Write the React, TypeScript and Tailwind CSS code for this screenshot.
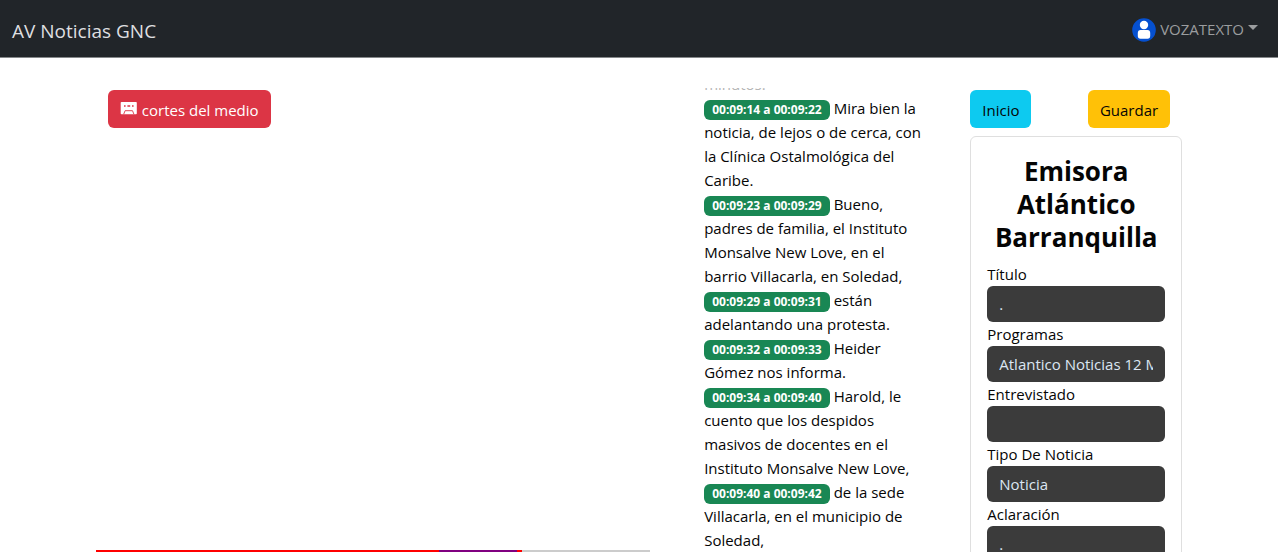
import { useLayoutEffect, useRef } from 'react';

type Segment = { time?: string; text: string };

const segments: Segment[] = [
  { text: 'minutos.' },
  {
    time: '00:09:14 a 00:09:22',
    text: 'Mira bien la noticia, de lejos o de cerca, con la Clínica Ostalmológica del Caribe.',
  },
  {
    time: '00:09:23 a 00:09:29',
    text: 'Bueno, padres de familia, el Instituto Monsalve New Love, en el barrio Villacarla, en Soledad,',
  },
  { time: '00:09:29 a 00:09:31', text: 'están adelantando una protesta.' },
  { time: '00:09:32 a 00:09:33', text: 'Heider Gómez nos informa.' },
  {
    time: '00:09:34 a 00:09:40',
    text: 'Harold, le cuento que los despidos masivos de docentes en el Instituto Monsalve New Love,',
  },
  { time: '00:09:40 a 00:09:42', text: 'de la sede Villacarla, en el municipio de Soledad,' },
];

const fields = [
  { id: 'titulo', label: 'Título', value: '.' },
  { id: 'programas', label: 'Programas', value: 'Atlantico Noticias 12 M' },
  { id: 'entrevistado', label: 'Entrevistado', value: '' },
  { id: 'tipo', label: 'Tipo De Noticia', value: 'Noticia' },
  { id: 'aclaracion', label: 'Aclaración', value: '.' },
];

function Navbar() {
  return (
    <nav className="flex h-[58px] items-center justify-between border-b border-[#85888a] bg-[#212529] pr-5 pl-3">
      <a href="#" className="pt-1 text-[19px] leading-7 text-[#dedfe0]">
        AV Noticias GNC
      </a>
      <button type="button" className="flex items-center gap-1 pt-0.5 text-[15px] text-[#9b9d9f]">
        <svg viewBox="0 0 24 24" className="size-6" aria-hidden="true">
          <circle cx="12" cy="12" r="11.8" fill="#0550d0" />
          <circle cx="12" cy="7" r="4.2" fill="#fff" />
          <path
            d="M8.500 12h7c1.700 0 2.700 1.200 2.700 3v3c0 1.600-.9 2.700-2.600 2.700H8.400c-1.700 0-2.600-1.100-2.600-2.700v-3c0-1.800 1-3 2.700-3z"
            fill="#fff"
          />
        </svg>
        VOZATEXTO
        <svg viewBox="0 0 10 5" className="mb-1 h-[5px] w-[10px]" aria-hidden="true">
          <path d="M0 0h10L5 5z" fill="#9b9d9f" />
        </svg>
      </button>
    </nav>
  );
}

function Player() {
  return (
    <section className="w-[51%]">
      <div className="flex h-[460px] items-start px-3">
        <button
          type="button"
          className="flex h-[38px] items-center gap-1 rounded-md bg-[#dc3545] px-3 pt-0.5 text-[15px] text-white"
        >
          <svg viewBox="0 0 18 14" className="mb-1 h-[14px] w-[18px]" aria-hidden="true">
            <path
              d="M1.500 1h14.500a.8.8 0 0 1 .8.800v10.600a.8.8 0 0 1-.8.800H1.500a.8.8 0 0 1-.8-.800V1.800a.8.8 0 0 1 .8-.800z"
              fill="#fff"
            />
            <path d="M4 4.200h1.600v1.600H4zM7.400 4.200h2.800v1.600H7.400zM12 4.200h1.600v1.600H12z" fill="#dc3545" />
            <path d="M3.700 13.200l1.400-3.500h7.400l1.400 3.500" fill="none" stroke="#dc3545" strokeWidth=".9" />
          </svg>
          cortes del medio
        </button>
      </div>
      <div className="flex h-4 bg-[#cccccc]" role="progressbar" aria-label="Progreso" aria-valuenow={77}>
        <div className="w-[62%] bg-[#ff0000]" />
        <div className="w-[14%] bg-[#800080]" />
        <div className="w-[1%] bg-[#ff0000]" />
      </div>
    </section>
  );
}

function Transcript() {
  const ref = useRef<HTMLDivElement>(null);

  useLayoutEffect(() => {
    if (ref.current) ref.current.scrollTop = 16;
  }, []);

  return (
    <div
      ref={ref}
      className="-mt-0.5 h-[464px] w-[20.5%] overflow-y-auto text-[15px] leading-6 [scrollbar-width:none]"
    >
      {segments.map((segment) => (
        <p key={segment.time ?? 'intro'} className={segment.time ? '' : 'text-[#b5b5b5]'}>
          {segment.time && (
            <span className="mr-1 inline-block rounded-md bg-[#198754] px-2 py-1 align-baseline text-[12px] leading-3 font-bold text-white">
              {segment.time}
            </span>
          )}
          {segment.text}
        </p>
      ))}
    </div>
  );
}

function NewsForm() {
  return (
    <section className="min-w-0 flex-1">
      <div className="flex justify-between pr-3">
        <button type="button" className="h-[38px] rounded-md bg-[#0dcaf0] px-3 pt-0.5 text-[15px]">
          Inicio
        </button>
        <button type="button" className="h-[38px] rounded-md bg-[#ffc107] px-3 pt-0.5 text-[15px]">
          Guardar
        </button>
      </div>
      <form className="mt-2 rounded-md border border-[#dfdfdf] px-4 pt-[18px] pb-4">
        <h1 className="mb-2 text-center text-[26px] leading-[33px] font-bold">Emisora Atlántico Barranquilla</h1>
        {fields.map((field) => (
          <div key={field.id}>
            <label htmlFor={field.id} className="block text-[15px] leading-6">
              {field.label}
            </label>
            <input
              id={field.id}
              type="text"
              defaultValue={field.value}
              className="block h-9 w-full rounded-md bg-[#3b3b3b] px-3 text-[15px] font-medium text-[#dce6f2]"
            />
          </div>
        ))}
      </form>
    </section>
  );
}

export default function App() {
  return (
    <div className="min-h-screen bg-white font-['Open_Sans','Noto_Sans',sans-serif] text-[#050505]">
      <Navbar />
      <main className="mx-auto flex w-[85%] pt-8">
        <Player />
        <div className="w-[5%]" />
        <Transcript />
        <div className="w-[4%]" />
        <NewsForm />
      </main>
    </div>
  );
}
